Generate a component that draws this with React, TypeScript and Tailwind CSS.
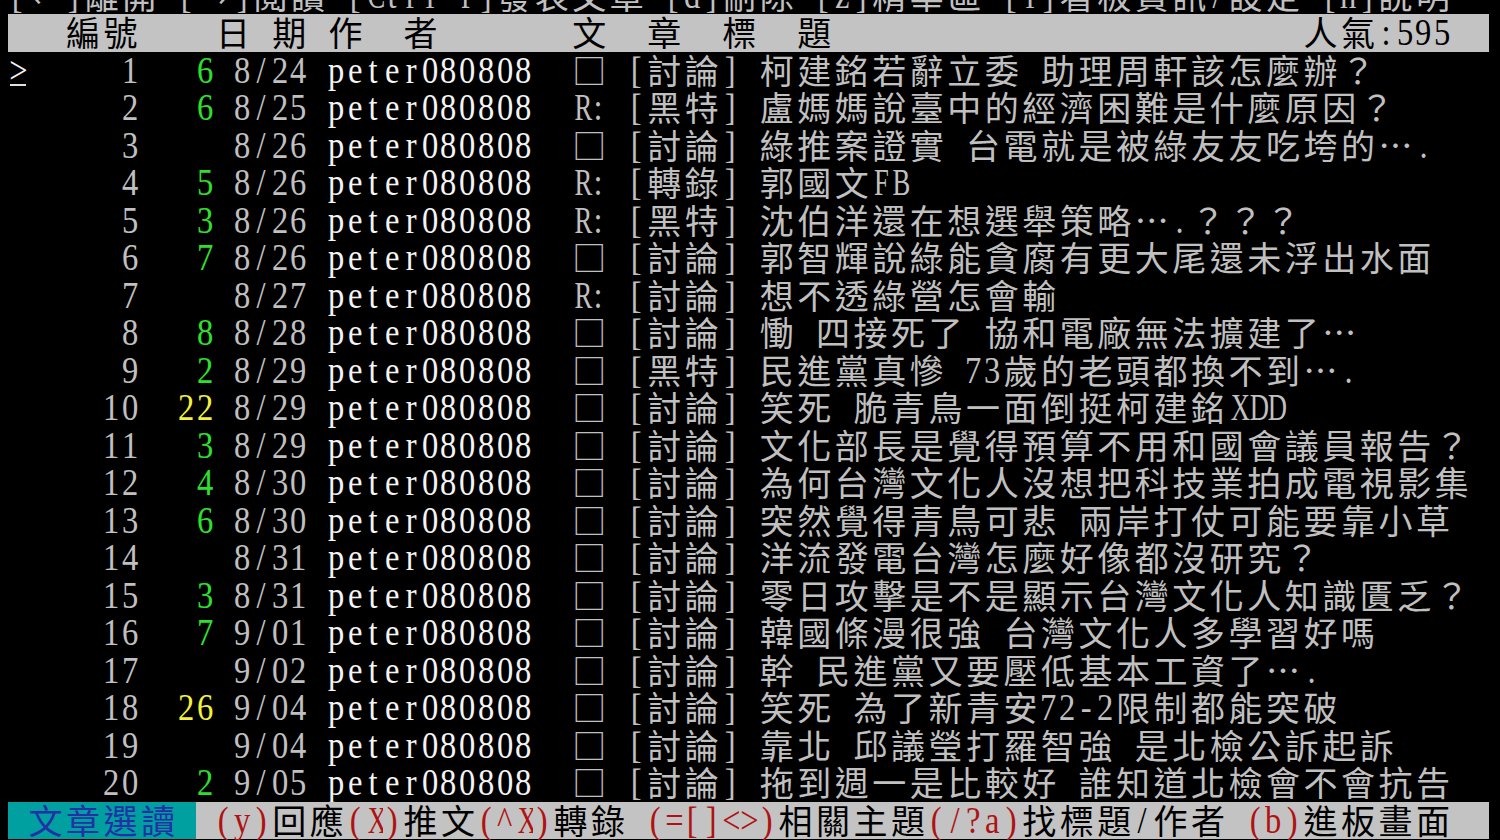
type Seg = [string, string, boolean?];

const GRAY = 'text-[#c0c0c0]';
const WHITE = 'text-[#f4f4f4]';
const GREEN = 'text-[#2ee02e]';
const YELLOW = 'text-[#f2f23a]';
const HEAD = 'text-black bg-[#c3c3c3]';
const BAR_RED = 'text-[#b01212] bg-[#c3c3c3]';
const BAR_BLACK = 'text-black bg-[#c3c3c3]';
const BAR_CYAN = 'text-[#2330a6] bg-[#00a0a0]';

const isWide = (ch: string) => {
  const c = ch.codePointAt(0) ?? 0;
  return c >= 0x2e80 || ch === '□' || ch === '…' || ch === '←' || ch === '→';
};

// latin glyphs are narrower in the terminal font, squeeze them a bit
const squeeze = (ch: string) => (/[A-Z]/.test(ch) ? 'scale-x-[0.72]' : 'scale-x-[0.88]');

function Line({ segs }: { segs: Seg[] }) {
  const cells: React.ReactNode[] = [];
  segs.forEach(([text, cls, cursor], si) => {
    Array.from(text).forEach((ch, ci) => {
      const wide = isWide(ch);
      cells.push(
        <span
          key={`${si}-${ci}`}
          className={`relative flex-none h-[37.5px] text-center whitespace-pre ${
            wide
              ? "w-[37.5px] font-['Noto_Sans_CJK_TC',sans-serif] text-[34px] leading-[35px]"
              : "w-[18.75px] font-['Liberation_Serif',serif] text-[37px] leading-[37.5px]"
          } ${cls}`}
        >
          {wide ? ch : <span className={`inline-block ${squeeze(ch)}`}>{ch}</span>}
          {cursor && <span className="absolute left-[2px] right-[1px] top-[32px] h-[2px] bg-[#e0e0e0]" />}
        </span>
      );
    });
  });
  return <div className="flex h-[37.5px]">{cells}</div>;
}

type Post = { n: number; rec: string; date: string; mark: string; cat: string; title: string };

const posts: Post[] = [
  { n: 1, rec: '6', date: '8/24', mark: '□', cat: '討論', title: '柯建銘若辭立委 助理周軒該怎麼辦？' },
  { n: 2, rec: '6', date: '8/25', mark: 'R:', cat: '黑特', title: '盧媽媽說臺中的經濟困難是什麼原因？' },
  { n: 3, rec: '', date: '8/26', mark: '□', cat: '討論', title: '綠推案證實 台電就是被綠友友吃垮的….' },
  { n: 4, rec: '5', date: '8/26', mark: 'R:', cat: '轉錄', title: '郭國文FB' },
  { n: 5, rec: '3', date: '8/26', mark: 'R:', cat: '黑特', title: '沈伯洋還在想選舉策略….？？？' },
  { n: 6, rec: '7', date: '8/26', mark: '□', cat: '討論', title: '郭智輝說綠能貪腐有更大尾還未浮出水面' },
  { n: 7, rec: '', date: '8/27', mark: 'R:', cat: '討論', title: '想不透綠營怎會輸' },
  { n: 8, rec: '8', date: '8/28', mark: '□', cat: '討論', title: '慟 四接死了 協和電廠無法擴建了…' },
  { n: 9, rec: '2', date: '8/29', mark: '□', cat: '黑特', title: '民進黨真慘 73歲的老頭都換不到….' },
  { n: 10, rec: '22', date: '8/29', mark: '□', cat: '討論', title: '笑死 脆青鳥一面倒挺柯建銘XDD' },
  { n: 11, rec: '3', date: '8/29', mark: '□', cat: '討論', title: '文化部長是覺得預算不用和國會議員報告？' },
  { n: 12, rec: '4', date: '8/30', mark: '□', cat: '討論', title: '為何台灣文化人沒想把科技業拍成電視影集' },
  { n: 13, rec: '6', date: '8/30', mark: '□', cat: '討論', title: '突然覺得青鳥可悲 兩岸打仗可能要靠小草' },
  { n: 14, rec: '', date: '8/31', mark: '□', cat: '討論', title: '洋流發電台灣怎麼好像都沒研究？' },
  { n: 15, rec: '3', date: '8/31', mark: '□', cat: '討論', title: '零日攻擊是不是顯示台灣文化人知識匱乏？' },
  { n: 16, rec: '7', date: '9/01', mark: '□', cat: '討論', title: '韓國條漫很強 台灣文化人多學習好嗎' },
  { n: 17, rec: '', date: '9/02', mark: '□', cat: '討論', title: '幹 民進黨又要壓低基本工資了….' },
  { n: 18, rec: '26', date: '9/04', mark: '□', cat: '討論', title: '笑死 為了新青安72-2限制都能突破' },
  { n: 19, rec: '', date: '9/04', mark: '□', cat: '討論', title: '靠北 邱議瑩打羅智強 是北檢公訴起訴' },
  { n: 20, rec: '2', date: '9/05', mark: '□', cat: '討論', title: '拖到週一是比較好 誰知道北檢會不會抗告' },
];

function postSegs(p: Post, i: number): Seg[] {
  const recColor = Number(p.rec) >= 10 ? YELLOW : GREEN;
  return [
    i === 0 ? ['>', WHITE, true] : [' ', GRAY],
    [String(p.n).padStart(6, ' ') + '  ', GRAY],
    [p.rec.padStart(2, ' '), recColor],
    [p.date.padStart(5, ' ') + ' ', GRAY],
    ['peter080808'.padEnd(13, ' '), WHITE],
    [p.mark + ' ', GRAY],
    [`[${p.cat}] ${p.title}`, GRAY],
  ];
}

const topLine: Seg[] = [['[←]離開 [→]閱讀 [Ctrl-P]發表文章 [d]刪除 [z]精華區 [i]看板資訊/設定 [h]說明', GRAY]];

const headLine: Seg[] = [
  ['   編號    日 期 作  者       文  章  標  題' + ' '.repeat(25) + '人氣:595  ', HEAD],
];

const barLine: Seg[] = [
  [' 文章選讀 ', BAR_CYAN],
  [' (y)', BAR_RED],
  ['回應', BAR_BLACK],
  ['(X)', BAR_RED],
  ['推文', BAR_BLACK],
  ['(^X)', BAR_RED],
  ['轉錄 ', BAR_BLACK],
  ['(=[]<>)', BAR_RED],
  ['相關主題', BAR_BLACK],
  ['(/?a)', BAR_RED],
  ['找標題/作者 ', BAR_BLACK],
  ['(b)', BAR_RED],
  ['進板畫面  ', BAR_BLACK],
];

export default function App() {
  return (
    <div className="w-[1500px] h-[840px] bg-black overflow-hidden">
      <div className="pl-[8px] mt-[-23.5px]">
        <Line segs={topLine} />
        <Line segs={headLine} />
        {posts.map((p, i) => (
          <Line key={p.n} segs={postSegs(p, i)} />
        ))}
        <Line segs={barLine} />
      </div>
    </div>
  );
}
